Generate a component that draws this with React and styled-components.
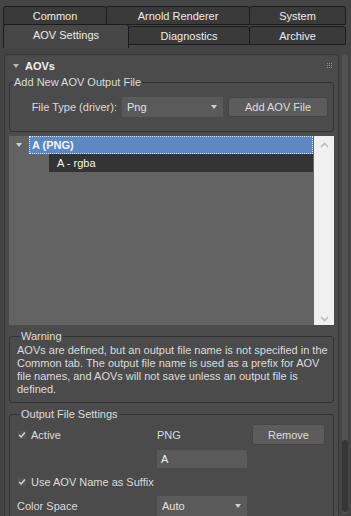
import React from "react";
import styled, { createGlobalStyle } from "styled-components";

const GlobalStyle = createGlobalStyle`
  html, body {
    margin: 0;
    background: #444444;
  }
  body {
    width: 351px;
    height: 516px;
    overflow: hidden;
    font-family: "Liberation Sans", Arial, sans-serif;
    font-size: 11px;
    color: #dcdcdc;
  }
`;

// Tabs on top
const TabBar = styled.div`
  display: flex;
  flex-direction: column;
  padding: 6px 5px 0 3px;
`;

const TabRow = styled.div`
  display: flex;
  align-items: flex-start;
  height: 19px;
  margin-top: ${(p) => (p.$second ? "1px" : "0")};
`;

const Tab = styled.div`
  box-sizing: border-box;
  width: ${(p) => p.$w}px;
  height: ${(p) => (p.$active ? "24px" : "19px")};
  margin-top: ${(p) => (p.$active ? "-2px" : "0")};
  margin-left: ${(p) => (p.$first ? "0" : "-1px")};
  padding-bottom: ${(p) => (p.$active ? "4px" : "0")};
  border: 1px solid #1c1c1c;
  border-bottom: ${(p) => (p.$active ? "none" : "1px solid #1c1c1c")};
  border-radius: 3px 3px 0 0;
  background: ${(p) => (p.$active ? "#474747" : "#3a3a3a")};
  position: relative;
  z-index: ${(p) => (p.$active ? 2 : 1)};
  display: flex;
  align-items: center;
  justify-content: center;
  color: #ececec;
`;

const Main = styled.div`
  display: flex;
  margin-top: 9px;
`;

const Rollout = styled.div`
  box-sizing: border-box;
  width: 335px;
  height: 470px;
  margin-left: 4px;
  padding: 0 4px;
  border: 1px solid #383838;
  border-bottom: none;
  border-radius: 3px 3px 0 0;
  background: #4b4b4b;
`;

const RollHeader = styled.div`
  display: flex;
  align-items: center;
  height: 21px;
  padding: 0 2px 0 4px;
`;

const Caret = styled.span`
  width: 0;
  height: 0;
  border-left: 3px solid transparent;
  border-right: 3px solid transparent;
  border-top: 4px solid ${(p) => p.$color || "#b8b8b8"};
`;

const RollTitle = styled.span`
  margin-left: 6px;
  font-weight: bold;
  color: #f2f2f2;
`;

const Grip = styled.span`
  margin-left: auto;
  display: grid;
  grid-template-columns: repeat(3, 1px);
  gap: 1px;
  span {
    width: 1px;
    height: 1px;
    background: #8a8a8a;
  }
`;

const Group = styled.fieldset`
  margin: ${(p) => p.$mt || 0}px 0 0 0;
  padding: ${(p) => p.$pad};
  min-width: 0;
  border: 1px solid #323232;
  border-radius: 3px;
`;

const Legend = styled.legend`
  margin-left: 3px;
  padding: 0 1px;
  line-height: 13px;
  color: #dcdcdc;
`;

const AddRow = styled.div`
  display: flex;
  align-items: center;
  justify-content: flex-end;
  padding-right: 5px;
`;

const Label = styled.span`
  margin-right: 5px;
`;

const Dropdown = styled.div`
  box-sizing: border-box;
  width: ${(p) => p.$w}px;
  height: ${(p) => p.$h || 20}px;
  padding: 0 6px 0 5px;
  background: #5a5a5a;
  display: flex;
  align-items: center;
  justify-content: space-between;
  color: #e2e2e2;
  grid-column: ${(p) => p.$col || "auto"};
`;

const Button = styled.div`
  box-sizing: border-box;
  width: ${(p) => p.$w}px;
  height: ${(p) => p.$h}px;
  margin-left: ${(p) => p.$ml || 0}px;
  border: 1px solid #464646;
  border-radius: 3px;
  background: #5c5c5c;
  display: flex;
  align-items: center;
  justify-content: center;
  color: #dcdcdc;
  grid-column: ${(p) => p.$col || "auto"};
`;

const ListBox = styled.div`
  display: flex;
  height: 189px;
  margin-top: 4px;
  background: #636363;
`;

const ListItems = styled.div`
  flex: 1;
  display: flex;
  flex-direction: column;
  margin-right: 1px;
`;

const ListRow = styled.div`
  display: flex;
  align-items: center;
  height: 18px;
`;

const Gutter = styled.div`
  width: ${(p) => p.$w}px;
  display: flex;
  justify-content: center;
  align-items: center;
`;

const Node = styled.div`
  box-sizing: border-box;
  flex: 1;
  height: 18px;
  padding-left: ${(p) => (p.$selected ? "2px" : "8px")};
  display: flex;
  align-items: center;
  background: ${(p) => (p.$selected ? "#5d88c1" : "#333333")};
  border: ${(p) => (p.$selected ? "1px dotted #d8e4f4" : "none")};
  font-weight: ${(p) => (p.$selected ? "bold" : "normal")};
  color: #f4f4f4;
`;

const ListScroll = styled.div`
  width: 20px;
  background: #f0f0f0;
  display: flex;
  flex-direction: column;
  justify-content: space-between;
  align-items: center;
  padding: 6px 0 3px;
`;

const WarnText = styled.div`
  line-height: 13px;
  span {
    display: block;
    white-space: nowrap;
  }
`;

const OutGrid = styled.div`
  display: grid;
  grid-template-columns: 140px 90px 5px 73px;
  grid-template-rows: 21px 18px 18px 20px;
  row-gap: 5px;
  align-items: center;
`;

const Check = styled.label`
  display: flex;
  align-items: center;
  gap: 5px;
  padding-left: 1px;
  grid-column: ${(p) => p.$span || "auto"};
`;

const TextInput = styled.div`
  box-sizing: border-box;
  height: 18px;
  padding-left: 4px;
  display: flex;
  align-items: center;
  background: #5a5a5a;
  color: #f0f0f0;
  grid-column: 2;
`;

const ScrollTrack = styled.div`
  width: 6px;
  height: 460px;
  margin-left: 3px;
  border-radius: 3px;
  background: #525252;
  display: flex;
  flex-direction: column;
`;

const Thumb = styled.div`
  height: 72px;
  margin-top: ${(p) => p.$top}px;
  border-radius: 3px;
  background: #363636;
`;

const CheckBox = () => (
  <svg width="8" height="8" viewBox="0 0 8 8">
    <rect x="0" y="0" width="8" height="8" fill="#555555" />
    <path d="M1.2 4 L3.1 6 L6.9 1.5" fill="none" stroke="#d6d6d6" strokeWidth="1.4" />
  </svg>
);

const Chevron = ({ down }) => (
  <svg width="9" height="6" viewBox="0 0 9 6">
    <path
      d={down ? "M1 1 L4.5 4.5 L8 1" : "M1 5 L4.5 1.5 L8 5"}
      fill="none"
      stroke="#bdbdbd"
      strokeWidth="1.6"
    />
  </svg>
);

const App = () => {
  return (
    <>
      <GlobalStyle />
      <TabBar>
        <TabRow>
          <Tab $w={104} $first>Common</Tab>
          <Tab $w={144}>Arnold Renderer</Tab>
          <Tab $w={97}>System</Tab>
        </TabRow>
        <TabRow $second>
          <Tab $w={126} $first $active>AOV Settings</Tab>
          <Tab $w={122}>Diagnostics</Tab>
          <Tab $w={97}>Archive</Tab>
        </TabRow>
      </TabBar>
      <Main>
        <Rollout>
          <RollHeader>
            <Caret />
            <RollTitle>AOVs</RollTitle>
            <Grip>
              {Array.from({ length: 9 }).map((_, i) => (
                <span key={i} />
              ))}
            </Grip>
          </RollHeader>

          <Group $pad="8px 0 14px 0">
            <Legend>Add New AOV Output File</Legend>
            <AddRow>
              <Label>File Type (driver):</Label>
              <Dropdown $w={101}>
                <span>Png</span>
                <Caret $color="#cfcfcf" />
              </Dropdown>
              <Button $w={100} $h={20} $ml={5}>
                Add AOV File
              </Button>
            </AddRow>
          </Group>

          <ListBox>
            <ListItems>
              <ListRow>
                <Gutter $w={20}>
                  <Caret $color="#d0d0d0" />
                </Gutter>
                <Node $selected>A (PNG)</Node>
              </ListRow>
              <ListRow>
                <Gutter $w={40} />
                <Node>A - rgba</Node>
              </ListRow>
            </ListItems>
            <ListScroll>
              <Chevron />
              <Chevron down />
            </ListScroll>
          </ListBox>

          <Group $mt={5} $pad="1px 0 6px 7px">
            <Legend>Warning</Legend>
            <WarnText>
              <span>AOVs are defined, but an output file name is not specified in the</span>
              <span>Common tab. The output file name is used as a prefix for AOV</span>
              <span>file names, and AOVs will not save unless an output file is</span>
              <span>defined.</span>
            </WarnText>
          </Group>

          <Group $mt={5} $pad="3px 0 8px 7px">
            <Legend>Output File Settings</Legend>
            <OutGrid>
              <Check>
                <CheckBox />
                Active
              </Check>
              <span>PNG</span>
              <Button $w={73} $h={21} $col={4}>
                Remove
              </Button>
              <TextInput>A</TextInput>
              <Check $span="1 / 5">
                <CheckBox />
                Use AOV Name as Suffix
              </Check>
              <span>Color Space</span>
              <Dropdown $w={90}>
                <span>Auto</span>
                <Caret $color="#cfcfcf" />
              </Dropdown>
            </OutGrid>
          </Group>
        </Rollout>
        <ScrollTrack>
          <Thumb $top={386} />
        </ScrollTrack>
      </Main>
    </>
  );
};

export default App;
